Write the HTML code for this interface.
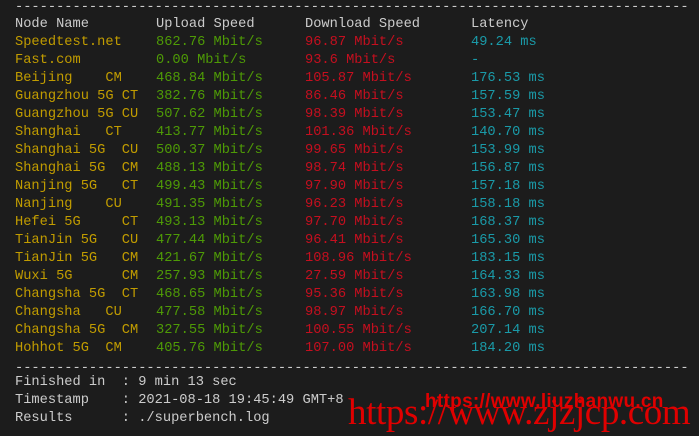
<!DOCTYPE html>
<html><head><style>
body{margin:0;width:699px;height:436px;background:#1c1c1c;overflow:hidden;position:relative;font-family:"Liberation Mono",monospace;font-size:13.7px;}
.r{position:absolute;left:0;height:18px;line-height:18px;white-space:pre;}
.r span{position:absolute;top:0;}
.w{color:#cccccc}.y{color:#c19c00}.g{color:#4e9a06}.d{color:#c50f1f}.c{color:#1a9aa8}
.a{left:15px}.b{left:156px}.e{left:305px}.f{left:471px}
.dash{position:absolute;left:15px;color:#cccccc;white-space:pre;letter-spacing:0;}
</style></head><body>
<div class="dash r" style="top:-1px">----------------------------------------------------------------------------------</div>
<div class="r w" style="top:16px"><span class="a">Node Name</span><span class="b">Upload Speed</span><span class="e">Download Speed</span><span class="f">Latency</span></div>
<div class="r" style="top:34px"><span class="a y">Speedtest.net</span><span class="b g">862.76 Mbit/s</span><span class="e d">96.87 Mbit/s</span><span class="f c">49.24 ms</span></div>
<div class="r" style="top:52px"><span class="a y">Fast.com</span><span class="b g">0.00 Mbit/s</span><span class="e d">93.6 Mbit/s</span><span class="f c">-</span></div>
<div class="r" style="top:70px"><span class="a y">Beijing    CM</span><span class="b g">468.84 Mbit/s</span><span class="e d">105.87 Mbit/s</span><span class="f c">176.53 ms</span></div>
<div class="r" style="top:88px"><span class="a y">Guangzhou 5G CT</span><span class="b g">382.76 Mbit/s</span><span class="e d">86.46 Mbit/s</span><span class="f c">157.59 ms</span></div>
<div class="r" style="top:106px"><span class="a y">Guangzhou 5G CU</span><span class="b g">507.62 Mbit/s</span><span class="e d">98.39 Mbit/s</span><span class="f c">153.47 ms</span></div>
<div class="r" style="top:124px"><span class="a y">Shanghai   CT</span><span class="b g">413.77 Mbit/s</span><span class="e d">101.36 Mbit/s</span><span class="f c">140.70 ms</span></div>
<div class="r" style="top:142px"><span class="a y">Shanghai 5G  CU</span><span class="b g">500.37 Mbit/s</span><span class="e d">99.65 Mbit/s</span><span class="f c">153.99 ms</span></div>
<div class="r" style="top:160px"><span class="a y">Shanghai 5G  CM</span><span class="b g">488.13 Mbit/s</span><span class="e d">98.74 Mbit/s</span><span class="f c">156.87 ms</span></div>
<div class="r" style="top:178px"><span class="a y">Nanjing 5G   CT</span><span class="b g">499.43 Mbit/s</span><span class="e d">97.90 Mbit/s</span><span class="f c">157.18 ms</span></div>
<div class="r" style="top:196px"><span class="a y">Nanjing    CU</span><span class="b g">491.35 Mbit/s</span><span class="e d">96.23 Mbit/s</span><span class="f c">158.18 ms</span></div>
<div class="r" style="top:214px"><span class="a y">Hefei 5G     CT</span><span class="b g">493.13 Mbit/s</span><span class="e d">97.70 Mbit/s</span><span class="f c">168.37 ms</span></div>
<div class="r" style="top:232px"><span class="a y">TianJin 5G   CU</span><span class="b g">477.44 Mbit/s</span><span class="e d">96.41 Mbit/s</span><span class="f c">165.30 ms</span></div>
<div class="r" style="top:250px"><span class="a y">TianJin 5G   CM</span><span class="b g">421.67 Mbit/s</span><span class="e d">108.96 Mbit/s</span><span class="f c">183.15 ms</span></div>
<div class="r" style="top:268px"><span class="a y">Wuxi 5G      CM</span><span class="b g">257.93 Mbit/s</span><span class="e d">27.59 Mbit/s</span><span class="f c">164.33 ms</span></div>
<div class="r" style="top:286px"><span class="a y">Changsha 5G  CT</span><span class="b g">468.65 Mbit/s</span><span class="e d">95.36 Mbit/s</span><span class="f c">163.98 ms</span></div>
<div class="r" style="top:304px"><span class="a y">Changsha   CU</span><span class="b g">477.58 Mbit/s</span><span class="e d">98.97 Mbit/s</span><span class="f c">166.70 ms</span></div>
<div class="r" style="top:322px"><span class="a y">Changsha 5G  CM</span><span class="b g">327.55 Mbit/s</span><span class="e d">100.55 Mbit/s</span><span class="f c">207.14 ms</span></div>
<div class="r" style="top:340px"><span class="a y">Hohhot 5G  CM</span><span class="b g">405.76 Mbit/s</span><span class="e d">107.00 Mbit/s</span><span class="f c">184.20 ms</span></div>
<div class="dash r" style="top:360px">----------------------------------------------------------------------------------</div>
<div class="r w" style="top:374px"><span class="a">Finished in  : 9 min 13 sec</span></div>
<div class="r w" style="top:392px"><span class="a">Timestamp    : 2021-08-18 19:45:49 GMT+8</span></div>
<div class="r w" style="top:410px"><span class="a">Results      : ./superbench.log</span></div>
<div style="position:absolute;left:425px;top:391px;color:#e00000;font-family:'Liberation Sans',sans-serif;font-weight:bold;font-size:19px;line-height:22px;white-space:nowrap;letter-spacing:0.3px;">https://www.liuzhanwu.cn</div>
<div style="position:absolute;left:348px;top:392px;color:#e00000;font-family:'Liberation Serif',serif;font-size:37px;line-height:42px;white-space:nowrap;letter-spacing:-0.4px;">https://www.zjzjcp.com</div>
</body></html>
